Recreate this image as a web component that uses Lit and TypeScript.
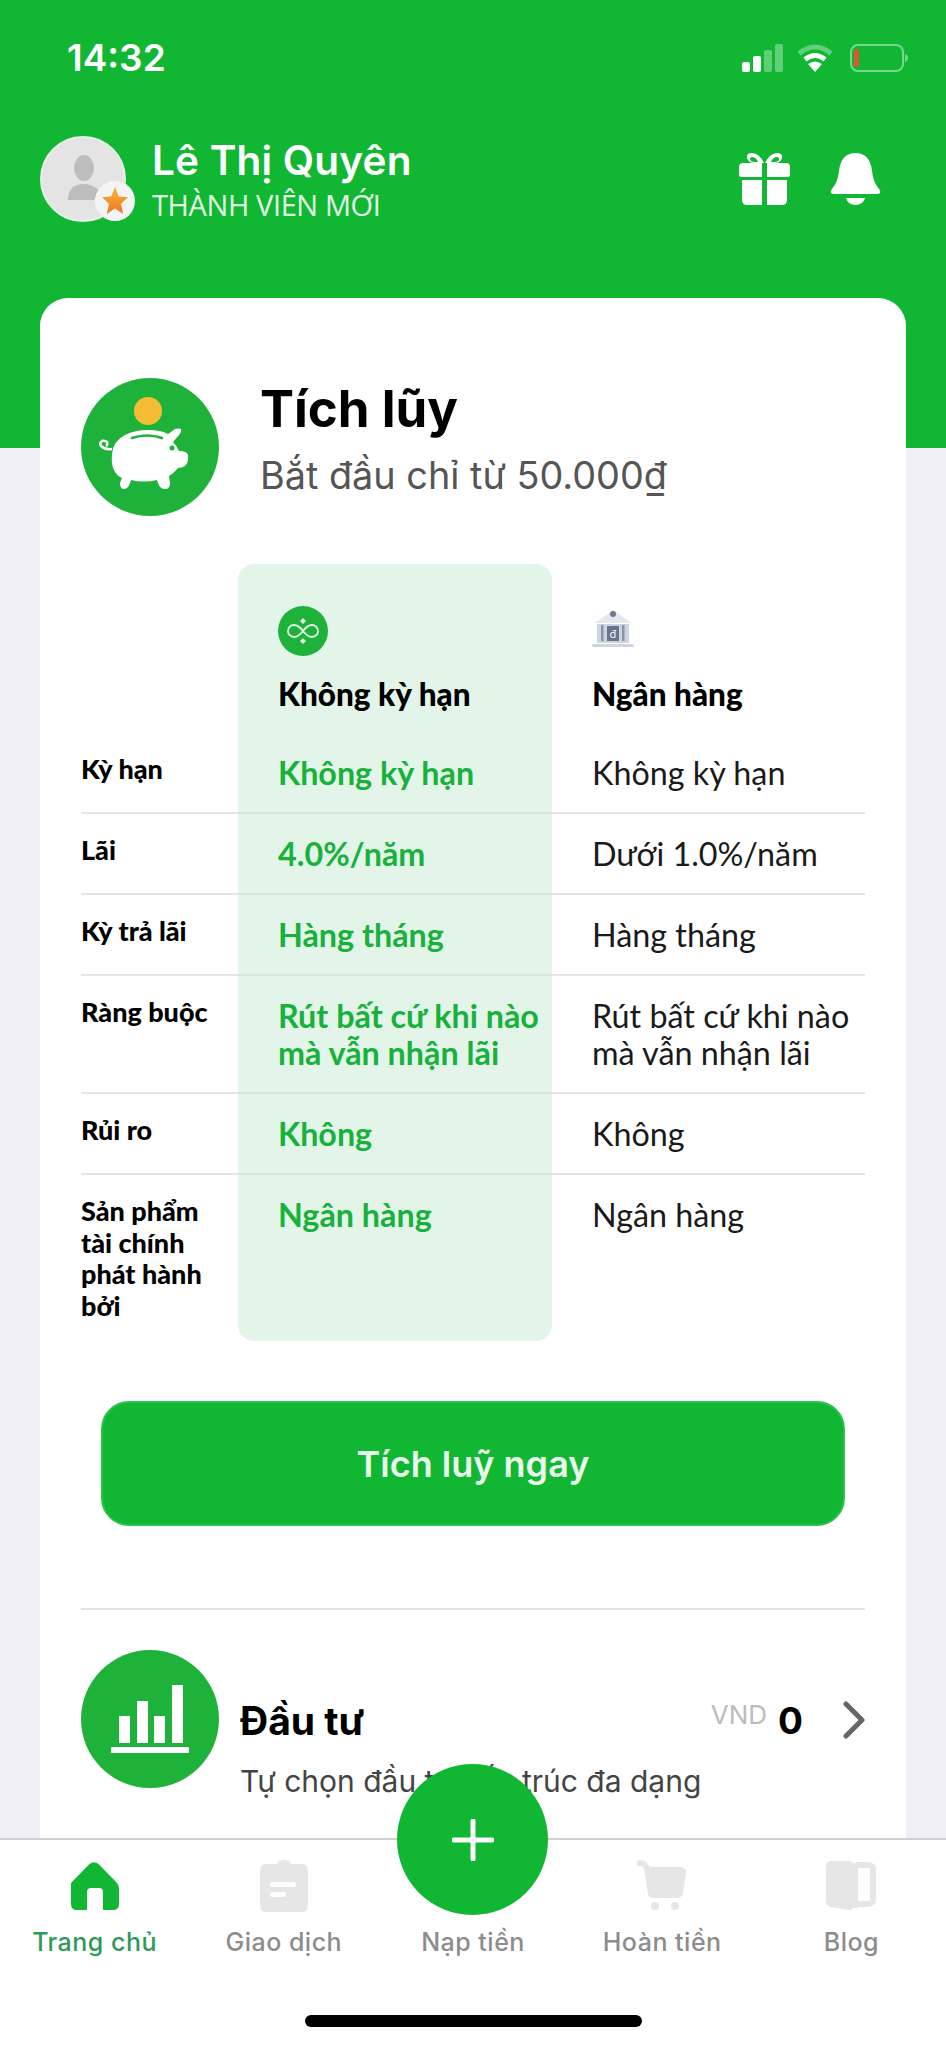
import { LitElement, html, css, svg } from "lit";
import { customElement } from "lit/decorators.js";

const rows: [string, string, string][] = [
  ["Kỳ hạn", "Không kỳ hạn", "Không kỳ hạn"],
  ["Lãi", "4.0%/năm", "Dưới 1.0%/năm"],
  ["Kỳ trả lãi", "Hàng tháng", "Hàng tháng"],
  ["Ràng buộc", "Rút bất cứ khi nào<br>mà vẫn nhận lãi", "Rút bất cứ khi nào<br>mà vẫn nhận lãi"],
  ["Rủi ro", "Không", "Không"],
  ["Sản phẩm<br>tài chính<br>phát hành<br>bởi", "Ngân hàng", "Ngân hàng"],
];

const lines = (s: string) => {
  const p = s.split("<br>");
  return p.map((t, i) => html`${t}${i < p.length - 1 ? html`<br />` : ""}`);
};

const tabs = [
  { label: "Trang chủ", active: true, icon: svg`<path fill="#11b733" d="M2 24 20 5.500q5-4.500 10 0L48 24q2 2 2 5v16q0 6-6 6H8q-6 0-6-6V29q0-3 0-5Z" transform="translate(0 -1)"/><rect x="18" y="28" width="16" height="19" rx="4" fill="#fff"/><rect x="18" y="38" width="16" height="12" fill="#fff"/>` },
  { label: "Giao dịch", icon: svg`<path fill="#e6e6e6" d="M8 4h11q1-4 7-4t7 4h11q6 0 6 6v36q0 6-6 6H8q-6 0-6-6V10q0-6 6-6Z"/><rect x="12" y="22" width="26" height="5" rx="2.5" fill="#fff"/><rect x="12" y="32" width="16" height="5" rx="2.5" fill="#fff"/>` },
  { label: "Nạp tiền", icon: svg`` },
  { label: "Hoàn tiền", icon: svg`<path fill="#e6e6e6" d="M1 3q0-3 3-3 5 0 7 3l3 4h30q7 0 6 6l-3 20q-1 5-6 5H17q-4 0-5-4L8 8Q6 5 3 6 1 6 1 3Z"/><circle cx="19" cy="46" r="4" fill="#e6e6e6"/><circle cx="39" cy="46" r="4" fill="#e6e6e6"/>` },
  { label: "Blog", icon: svg`<path fill="#e6e6e6" d="M6 1h19q2 0 2 3v44q0 3-3 2L6 47q-5-1-5-6V7q0-6 5-6Z"/><path fill="none" stroke="#e6e6e6" stroke-width="6" d="M31 5h11q6 0 6 5v29q0 5-6 5H30"/><path fill="#e6e6e6" d="M27 3h6v45h-6z"/>` },
];

@customElement("app-root")
export class AppRoot extends LitElement {
  static styles = css`
    :host { display: block; width: 946px; height: 2048px; position: relative; overflow: hidden; font-family: Inter, "Noto Sans", sans-serif; background: #fff; }
    .main { height: 1838px; overflow: hidden; background: linear-gradient(#11b733 448px, #f1eff6 448px); }
    .status { height: 115px; padding: 0 38px 0 67px; display: flex; justify-content: space-between; align-items: center; box-sizing: border-box; }
    .time { color: #fff; font-size: 37px; font-weight: 600; font-family: Inter, sans-serif; }
    .status-icons { display: flex; align-items: center; gap: 17px; }
    .status-icons svg:first-child { margin-right: -3px; }
    .profile { height: 108px; margin-top: 13px; padding: 0 65px 0 40px; display: flex; align-items: flex-start; }
    .avatar { width: 86px; height: 86px; border-radius: 50%; background: #e4e4e4; border: 2px solid #e8efe9; box-sizing: border-box; position: relative; flex: none; margin-top: 8px; }
    .avatar svg.person { display: block; }
    .badge { position: absolute; right: -11px; bottom: -1px; width: 40px; height: 40px; border-radius: 50%; background: #f4f4f4; display: flex; align-items: center; justify-content: center; }
    .who { margin-left: 26px; flex: 1; color: #fff; }
    .name { font-size: 40.5px; font-weight: 600; line-height: 46px; margin-top: 10px; letter-spacing: 0.2px; }
    .rank { font-size: 29px; line-height: 32px; margin-top: 5px; color: #e2f7e6; font-family: "Open Sans", sans-serif; letter-spacing: -0.4px; }
    .head-icons { display: flex; gap: 40px; margin-top: 25px; }
    .card { margin: 62px 40px 0; background: #fff; border-radius: 28px 28px 0 0; padding: 80px 41px 0; box-sizing: border-box; height: 1541px; }
    .hero { display: flex; align-items: flex-start; }
    .hero-icon { width: 138px; height: 138px; flex: none; display: block; }
    .hero-text { margin-left: 41px; }
    .hero-title { font-size: 51px; font-weight: 700; color: #000; line-height: 60px; margin-top: 1px; }
    .hero-sub { font-size: 37.8px; color: #555; line-height: 44px; margin-top: 14px; }
    .grid { display: grid; grid-template-columns: 157px 314px 313px; margin-top: 48px; font-family: Lato, "Noto Sans", sans-serif; }
    .hcell { padding: 42px 0 0 40px; height: 169px; box-sizing: border-box; }
    .hcell svg { display: block; }
    .hcell .t { font-size: 31.5px; font-weight: 900; color: #000; line-height: 37px; margin-top: 20px; font-family: Lato, sans-serif; }
    .hcell.b .t { margin-top: 27px; }
    .hcell.b svg { margin-top: 1px; }
    .green { background: #e3f5e9; }
    .top { border-radius: 16px 16px 0 0; }
    .bottom { border-radius: 0 0 16px 16px; }
    .cell { padding: 21px 0 21px 40px; font-size: 32.3px; line-height: 37px; color: #1a1a1a; border-bottom: 2px solid rgba(0, 0, 0, 0.1); box-sizing: border-box; }
    .cell.g { color: #18b13b; font-weight: 700; border-bottom-color: rgba(0, 0, 0, 0.06); }
    .cell.l { padding: 20px 0 0; font-size: 27px; line-height: 31.5px; font-weight: 900; color: #000; }
    .cell.last { border-bottom: 0; height: 166px; }
    .cell.v2 { position: relative; top: -1px; }
    .btn { margin: 60px 20px 0; height: 125px; border-radius: 28px; background: #11b733; border: 2px solid #2cc24b; box-sizing: border-box; color: #e9f9ec; font-size: 36px; font-weight: 600; display: flex; align-items: center; justify-content: center; }
    .sep { height: 2px; background: #e2e2e2; margin-top: 82px; }
    .invest { display: flex; margin-top: 40px; align-items: flex-start; }
    .inv-text { margin-left: 21px; flex: 1; }
    .inv-top { display: flex; align-items: center; justify-content: space-between; margin-top: 46px; height: 48px; }
    .inv-title { font-size: 39px; font-weight: 700; color: #000; }
    .amount { display: flex; align-items: center; }
    .vnd { font-size: 26px; color: #bcbcbc; margin-right: 11px; position: relative; top: -6px; }
    .zero { font-size: 37px; font-weight: 700; color: #000; margin-right: 40px; }
    .inv-sub { font-size: 30px; color: #444; margin-top: 19px; line-height: 36px; }
    .tabbar { height: 210px; border-top: 2px solid #d0d0d0; box-sizing: border-box; background: #fff; display: flex; flex-direction: column; }
    .tabs { display: flex; flex: 1; }
    .tab { flex: 1; display: flex; flex-direction: column; align-items: center; padding-top: 20px; }
    .tab svg { display: block; }
    .tab .lb { font-size: 25px; line-height: 32px; color: #8c8c8c; margin-top: 14px; font-weight: 500; letter-spacing: 0.5px; }
    .tab.on .lb { color: #2f9a57; }
    .pill { width: 337px; height: 12px; border-radius: 6px; background: #000; margin: 0 auto 21px; }
    .fab { position: absolute; left: 397px; top: 1764px; width: 151px; height: 151px; border-radius: 50%; background: #11b733; display: flex; align-items: center; justify-content: center; }
  `;

  render() {
    return html`
      <div class="main">
        <div class="status">
          <span class="time">14:32</span>
          <div class="status-icons">
            <svg width="41" height="28" viewBox="0 0 41 28"><rect x="0" y="18" width="8" height="10" rx="2" fill="#fff"/><rect x="11" y="12" width="8" height="16" rx="2" fill="#fff"/><rect x="22" y="6" width="8" height="22" rx="2" fill="#5fd078"/><rect x="33" y="0" width="8" height="28" rx="2" fill="#5fd078"/></svg>
            <svg width="36" height="28" viewBox="0 0 36 28"><path fill="none" stroke="#5fd078" stroke-width="5" d="M2 9.500q16-13 32 0"/><path fill="none" stroke="#fff" stroke-width="5" d="M8 15.500q10-8 20 0"/><path fill="#fff" d="M11 20q7-5 14 0l-7 8Z"/></svg>
            <svg width="58" height="28" viewBox="0 0 58 28"><rect x="1" y="1" width="52" height="26" rx="7" fill="none" stroke="#74d98c" stroke-width="2"/><rect x="4" y="5" width="5" height="18" rx="2" fill="#e0552d"/><path d="M55 10q3 1 3 4t-3 4Z" fill="#74d98c"/></svg>
          </div>
        </div>
        <div class="profile">
          <div class="avatar">
            <svg class="person" width="82" height="82" viewBox="0 0 82 82"><ellipse cx="42" cy="30" rx="10" ry="13" fill="#bdbdbd"/><path d="M26 62q0-16 16-16 10 0 16 8l-6 8Z" fill="#bdbdbd"/></svg>
            <div class="badge"><svg width="26" height="28" viewBox="0 0 26 28"><defs><linearGradient id="st" x1="0" y1="0" x2="0" y2="1"><stop offset="0" stop-color="#f7b733"/><stop offset="1" stop-color="#f0742a"/></linearGradient></defs><path fill="url(#st)" d="m13 0 3.800 9.500 9.200.8-7 6.500 2.200 10.200L13 21.500 4.800 27 7 16.800 0 10.300l9.200-.8Z"/></svg></div>
          </div>
          <div class="who">
            <div class="name">Lê Thị Quyên</div>
            <div class="rank">THÀNH VIÊN MỚI</div>
          </div>
          <div class="head-icons">
            <svg width="51" height="52" viewBox="0 0 51 52"><g fill="#fff"><path d="M4 10h19v14H2q-2 0-2-2V14q0-4 4-4ZM47 10H28v14h21q2 0 2-2V14q0-4-4-4ZM3 27h20v25H8q-5 0-5-5ZM48 27H28v25h15q5 0 5-5Z"/><path fill-rule="evenodd" d="M13 0q7 0 12 10h-9Q9 10 8 5t5-5Zm0 4q-2 0-2 2 0 3 5 3h3q-2-5-6-5Zm25-4q-7 0-12 10h9q7 0 8-5t-5-5Zm0 4q2 0 2 2 0 3-5 3h-3q2-5 6-5Z"/></g></svg>
            <svg width="51" height="52" viewBox="0 0 51 52"><g fill="#fff"><path d="M25.500 0Q40 0 42 18q1 11 7 18 3 4-1 5H3q-4-1-1-5 6-7 7-18Q11 0 25.500 0Z"/><path d="M16 45h19q-2 7-9.500 7T16 45Z"/></g></svg>
          </div>
        </div>
        <div class="card">
          <div class="hero">
            <svg class="hero-icon" viewBox="0 0 138 138">
              <circle cx="69" cy="69" r="69" fill="#1eb23a"/>
              <circle cx="67" cy="33" r="14" fill="#f5bd33"/>
              <path fill="#fff" d="M41 100q-6-3-8-8-3-6-2-16 1-13 13-19 10-5 23-5 13 0 20 4l7-5q5-1 6 0 1 2-2 6l-6 7q4 4 6 9 8 0 9 4 1 7-3 11-3 2-7 2-4 5-9 8l1 7q0 6-5 6-5 0-7-6l-1-3q-13 3-26 0l-1 3q-2 6-6 6-4 0-4-6Z"/>
              <path fill="none" stroke="#fff" stroke-width="2.500" d="M31 71q-7 1-11-3-2-3 1-5 3-1 5 1 1 3-1 4"/>
              <path fill="none" stroke="#1eb23a" stroke-width="2.500" stroke-linecap="round" d="M51 60q15-5 30 0"/>
              <circle cx="91" cy="70" r="2.500" fill="#1eb23a"/>
            </svg>
            <div class="hero-text">
              <div class="hero-title">Tích lũy</div>
              <div class="hero-sub">Bắt đầu chỉ từ 50.000₫</div>
            </div>
          </div>
          <div class="grid">
            <div class="hcell nolab"></div>
            <div class="hcell green top">
              <svg width="50" height="50" viewBox="0 0 50 50"><circle cx="25" cy="25" r="25" fill="#1eb23a"/><path fill="none" stroke="#dff5e4" stroke-width="1.800" d="M25 25c-3-4-6-6-9-6-3.500 0-6 2.700-6 6s2.500 6 6 6c3 0 6-2 9-6s6-6 9-6c3.500 0 6 2.700 6 6s-2.500 6-6 6c-3 0-6-2-9-6Z"/><path fill="#dff5e4" d="m25 12 3 3-3 3-3-3Zm0 20 3 3-3 3-3-3Z"/></svg>
              <div class="t">Không kỳ hạn</div>
            </div>
            <div class="hcell b">
              <svg width="42" height="42" viewBox="0 0 42 42"><path fill="#e4e7ee" d="M21 3 39 16H3Z"/><circle cx="21" cy="7" r="3" fill="#717a94"/><rect x="5" y="17" width="32" height="19" fill="#cdd3df"/><rect x="9" y="18" width="2.500" height="16" fill="#8a93a8"/><rect x="30" y="18" width="2.500" height="16" fill="#8a93a8"/><rect x="15" y="19" width="12" height="15" fill="#68738d"/><text x="21" y="31" font-size="11" fill="#fff" text-anchor="middle" font-family="Noto Sans, sans-serif">đ</text><rect x="0" y="37" width="42" height="3" rx="1.500" fill="#cfd4de"/></svg>
              <div class="t">Ngân hàng</div>
            </div>
            ${rows.map((r, i) => {
              const last = i === rows.length - 1;
              return html`
                <div class="cell l ${last ? "last" : ""}">${lines(r[0])}</div>
                <div class="cell g green ${last ? "last bottom" : ""}">${lines(r[1])}</div>
                <div class="cell ${last ? "last" : ""}">${lines(r[2])}</div>
              `;
            })}
          </div>
          <div class="btn">Tích luỹ ngay</div>
          <div class="sep"></div>
          <div class="invest">
            <svg class="hero-icon" viewBox="0 0 138 138">
              <circle cx="69" cy="69" r="69" fill="#1eb23a"/>
              <g fill="#fff">
                <rect x="38" y="66" width="11" height="27"/><rect x="56" y="51" width="11" height="42"/><rect x="73" y="66" width="11" height="27"/><rect x="91" y="35" width="11" height="58"/>
                <rect x="30" y="97" width="78" height="6" rx="1"/>
              </g>
            </svg>
            <div class="inv-text">
              <div class="inv-top">
                <span class="inv-title">Đầu tư</span>
                <div class="amount">
                  <span class="vnd">VND</span>
                  <span class="zero">0</span>
                  <svg width="22" height="38" viewBox="0 0 22 38"><path fill="none" stroke="#666" stroke-width="5" stroke-linecap="round" stroke-linejoin="round" d="M3 3 19 19 3 35"/></svg>
                </div>
              </div>
              <div class="inv-sub">Tự chọn đầu tư cấu trúc đa dạng</div>
            </div>
          </div>
        </div>
      </div>
      <div class="tabbar">
        <div class="tabs">
          ${tabs.map(t => html`<div class="tab ${t.active ? "on" : ""}"><svg width="52" height="52" viewBox="0 0 52 52">${t.icon}</svg><div class="lb">${t.label}</div></div>`)}
        </div>
        <div class="pill"></div>
      </div>
      <div class="fab"><svg width="42" height="42" viewBox="0 0 42 42"><path stroke="#fff" stroke-width="5" stroke-linecap="round" d="M21 2v38M2 21h38"/></svg></div>
    `;
  }
}
